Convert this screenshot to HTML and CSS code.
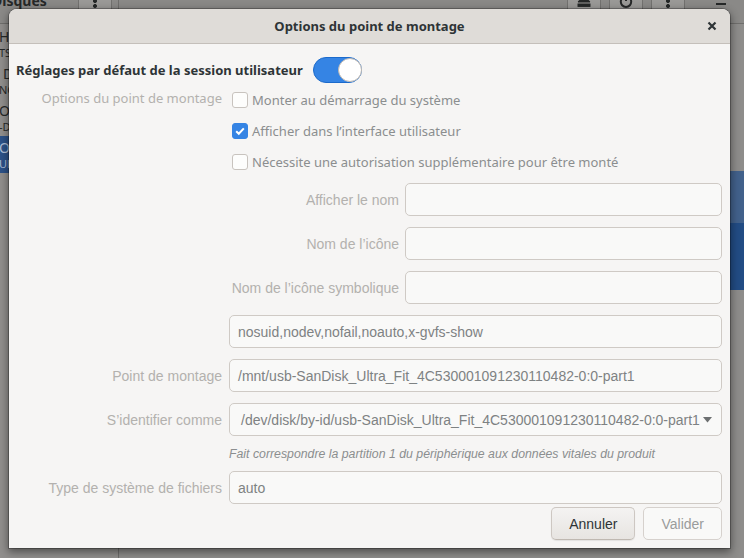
FILE: index.html
```html
<!DOCTYPE html>
<html>
	<head>
		<meta charset="UTF-8">
		<title>Options du point de montage</title>
		<link rel="stylesheet" href="styles.css">
	</head>
	<body>
		<div class="desk">
			<!-- fenêtre Disques, en arrière-plan -->
			<div class="app">
				<div class="app-bar">
					<div class="app-bar-left">
						<span class="app-title">Disques</span>
						<span class="hb-btn">
							<svg width="4" height="14" viewBox="0 0 4 14"><circle cx="2" cy="2" r="1.6"/><circle cx="2" cy="7" r="1.6"/><circle cx="2" cy="12" r="1.6"/></svg>
						</span>
					</div>
					<div class="app-bar-right">
						<span class="app-sub">/dev/sdc</span>
						<span class="hb-btn">
							<svg width="14" height="14" viewBox="0 0 14 14"><path d="M7 1 L13 8 H1 Z"/><rect x="1" y="10" width="12" height="2.4"/></svg>
						</span>
						<span class="hb-btn">
							<svg width="14" height="14" viewBox="0 0 14 14" fill="none" stroke-width="2"><path d="M4 3.5 A5.2 5.2 0 1 0 10 3.5"/><path d="M7 1 V7"/></svg>
						</span>
						<span class="hb-btn">
							<svg width="4" height="14" viewBox="0 0 4 14"><circle cx="2" cy="2" r="1.6"/><circle cx="2" cy="7" r="1.6"/><circle cx="2" cy="12" r="1.6"/></svg>
						</span>
						<span class="win-min"></span>
					</div>
				</div>
				<div class="app-body">
					<ul class="sidebar">
						<li><b>HDD 1,0 To</b><small>TS1TSJ25M3</small></li>
						<li><b class="ind">DVD</b><small>NG DVDRW</small></li>
						<li><b>ODD Drive</b><small>-DVD RW</small></li>
						<li class="sel"><b>Ordinateur</b><small>Ultra Fit</small></li>
					</ul>
					<div class="app-main">
						<div class="vol-light"></div>
						<div class="vol-dark"></div>
					</div>
				</div>
			</div>

			<!-- la boîte de dialogue -->
			<div class="dialog">
				<div class="dlg-title">
					<span>Options du point de montage</span>
					<svg class="close" width="10" height="10" viewBox="0 0 10 10"><path d="M1.5 1.5 L8.5 8.5 M8.5 1.5 L1.5 8.5"/></svg>
				</div>
				<div class="dlg-body">
					<div class="head-row">
						<span class="head">Réglages par défaut de la session utilisateur</span>
						<span class="switch"><span class="knob"></span></span>
					</div>

					<div class="row checks-row">
						<label class="lbl lbl-top">Options du point de montage</label>
						<div class="checks">
							<div class="check"><span class="box"></span>Monter au démarrage du système</div>
							<div class="check"><span class="box on"><svg width="12" height="12" viewBox="0 0 12 12"><path d="M2.2 6.2 L4.8 8.8 L9.8 3.4"/></svg></span>Afficher dans l’interface utilisateur</div>
							<div class="check"><span class="box"></span>Nécessite une autorisation supplémentaire pour être monté</div>
						</div>
					</div>

					<div class="row names-row">
						<span></span>
						<div class="names">
							<label class="lbl">Afficher le nom</label>
							<div class="entry"></div>
							<label class="lbl">Nom de l’icône</label>
							<div class="entry"></div>
							<label class="lbl">Nom de l’icône symbolique</label>
							<div class="entry"></div>
						</div>
					</div>

					<div class="row">
						<span></span>
						<div class="entry">nosuid,nodev,nofail,noauto,x-gvfs-show</div>
					</div>

					<div class="row">
						<label class="lbl">Point de montage</label>
						<div class="entry">/mnt/usb-SanDisk_Ultra_Fit_4C530001091230110482-0:0-part1</div>
					</div>

					<div class="row">
						<label class="lbl">S’identifier comme</label>
						<div class="entry combo">
							<span>/dev/disk/by-id/usb-SanDisk_Ultra_Fit_4C530001091230110482-0:0-part1</span>
							<svg width="9" height="6" viewBox="0 0 9 6"><path d="M0 0 H9 L4.5 5.5 Z"/></svg>
						</div>
					</div>

					<div class="row hint-row">
						<span></span>
						<div class="hint">Fait correspondre la partition 1 du périphérique aux données vitales du produit</div>
					</div>

					<div class="row type-row">
						<label class="lbl">Type de système de fichiers</label>
						<div class="entry">auto</div>
					</div>

					<div class="actions">
						<span class="btn">Annuler</span>
						<span class="btn off">Valider</span>
					</div>
				</div>
			</div>
		</div>
	</body>
</html>
```

FILE: styles.css
```css
/* fenêtre 744*558 */

body, ul{margin:0; padding:0;}
ul{list-style:none;}
body{
	font-family:"Noto Sans", "Open Sans", sans-serif;
	font-size:13px;
	color:#2e3436;
	overflow:hidden;
}
.desk{
	position:relative;
	width:744px;
	height:558px;
	overflow:hidden;
	background:#8c8b89;
}

/* ---- arrière-plan (application Disques, assombrie) ---- */
.app{
	position:absolute;
	left:-62px;
	top:-22px;
	width:830px;
	height:600px;
	display:flex;
	flex-direction:column;
	background:#8e8d8b;
}
.app-bar{
	display:flex;
	height:45px;
	background:#8a8987;
	border-bottom:1px solid #6f6e6c;
}
.app-bar-left{
	width:180px;
	display:flex;
	align-items:center;
	border-right:1px solid #6f6e6c;
}
.app-title{
	font-weight:bold;
	font-size:14px;
	color:#262828;
	margin-left:54px;
	width:86px;
}
.hb-btn{
	width:34px;
	height:34px;
	flex:none;
	display:flex;
	align-items:center;
	justify-content:center;
	background:#9a9997;
	border:1px solid #72716f;
	border-radius:5px;
	box-sizing:border-box;
	fill:#262828;
	stroke:#262828;
}
.app-bar-right{
	flex:1;
	display:flex;
	align-items:center;
	gap:8px;
}
.app-sub{
	color:#5e5e5c;
	font-size:11px;
	width:111px;
	margin:0 0 0 329px;
	position:relative;
	top:-6px;
}
.win-min{
	width:10px;
	height:2px;
	background:#262828;
	margin:7px 0 0 23px;
}
.app-body{
	flex:1;
	display:flex;
}
.sidebar{
	width:180px;
	padding-top:1px;
	background:#918f8d;
	border-right:1px solid #6f6e6c;
}
.sidebar li{
	height:37px;
	padding-left:61px;
	display:flex;
	flex-direction:column;
	justify-content:center;
	white-space:nowrap;
	color:#262828;
}
.sidebar b{font-size:14px; font-weight:normal; line-height:17px;}
.sidebar small{font-size:11px; line-height:15px;}
.sidebar .ind{padding-left:4px;}
.sidebar li.sel{background:#2c5288; color:#aebfd6;}
.app-main{
	flex:1;
	padding-top:147px;
}
.vol-light{height:52px; background:#42618b;}
.vol-dark{height:67px; background:#224c84;}

/* ---- boîte de dialogue ---- */
.dialog{
	position:absolute;
	left:9px;
	top:9px;
	width:721px;
	height:539px;
	background:#f6f5f4;
	border-radius:8px 8px 0 0;
	box-shadow:0 0 0 1px rgba(0,0,0,.25), 0 3px 9px 1px rgba(0,0,0,.45);
	display:flex;
	flex-direction:column;
}
.dlg-title{
	height:34px;
	border-bottom:1px solid #c4bfba;
	background:#dfdcd8;
	border-radius:8px 8px 0 0;
	display:flex;
	align-items:center;
	justify-content:center;
	position:relative;
	font-weight:bold;
	font-size:13px;
}
.close{
	position:absolute;
	right:13px;
	top:12px;
	stroke:#2e3436;
	stroke-width:2.2;
}
.dlg-body{
	padding:13px 8px 8px 7px;
	display:flex;
	flex-direction:column;
}
.head-row{
	display:flex;
	align-items:center;
	gap:10px;
	height:26px;
}
.head{font-weight:bold;}
.switch{
	width:49px;
	height:26px;
	box-sizing:border-box;
	border-radius:13px;
	background:#3584e4;
	border:1px solid #1b6acb;
	display:flex;
	justify-content:flex-end;
	align-items:center;
}
.knob{
	width:24px;
	height:24px;
	box-sizing:border-box;
	border-radius:50%;
	background:#fff;
	border:1px solid #bfb8b1;
	margin-right:-1px;
}
.row{
	display:grid;
	grid-template-columns:206px 1fr;
	column-gap:7px;
	align-items:center;
	margin-top:11px;
}
.lbl{
	text-align:right;
	color:#b3b1ae;
	white-space:nowrap;
	font-family:"Liberation Sans", Arial, sans-serif;
	font-size:14px;
}
.checks-row{margin-top:1px; align-items:start;}
.lbl-top{
	line-height:28px;
	font-family:"Noto Sans", sans-serif;
	font-size:13px;
}
.check{
	height:31px;
	display:flex;
	align-items:center;
	color:#8b8e8f;
	white-space:nowrap;
}
.box{
	width:16px;
	height:16px;
	box-sizing:border-box;
	margin:0 4px 0 3px;
	border:1px solid #c8c3be;
	border-radius:3px;
	background:#fdfdfc;
	display:flex;
	align-items:center;
	justify-content:center;
}
.box.on{
	background:#3584e4;
	border-color:#3584e4;
}
.box svg{fill:none; stroke:#fff; stroke-width:2;}
.names-row{margin-top:6px;}
.names{
	display:grid;
	grid-template-columns:170px 1fr;
	column-gap:6px;
	row-gap:11px;
	align-items:center;
}
.entry{
	height:33px;
	box-sizing:border-box;
	border:1px solid #cfcac5;
	border-radius:5px;
	background:#f9f9f8;
	padding:0 8px;
	display:flex;
	align-items:center;
	color:#7e8283;
	font-family:"Liberation Sans", Arial, sans-serif;
	font-size:14px;
	white-space:nowrap;
	overflow:hidden;
}
.combo{
	padding:0 9px 0 11px;
	justify-content:space-between;
}
.combo svg{fill:#6d7071; flex:none;}
.hint-row{margin-top:11px;}
.hint{
	font-family:"Liberation Sans", Arial, sans-serif;
	font-style:italic;
	font-size:12.3px;
	color:#8b8e8f;
	white-space:nowrap;
}
.type-row{margin-top:10px;}
.actions{
	display:flex;
	justify-content:flex-end;
	gap:8px;
	margin-top:3px;
}
.btn{
	height:33px;
	box-sizing:border-box;
	padding:0 17px;
	display:flex;
	align-items:center;
	border:1px solid #cdc7c2;
	border-bottom-color:#bfb8b1;
	border-radius:5px;
	background:linear-gradient(#f4f3f2, #e7e4e1);
	box-shadow:0 1px 1px rgba(0,0,0,.08);
	font-family:"Liberation Sans", Arial, sans-serif;
	font-size:14px;
	color:#2e3436;
}
.btn.off{
	background:#f9f9f8;
	border-color:#d6d1cd;
	box-shadow:none;
	color:#9a9c9c;
}
```
